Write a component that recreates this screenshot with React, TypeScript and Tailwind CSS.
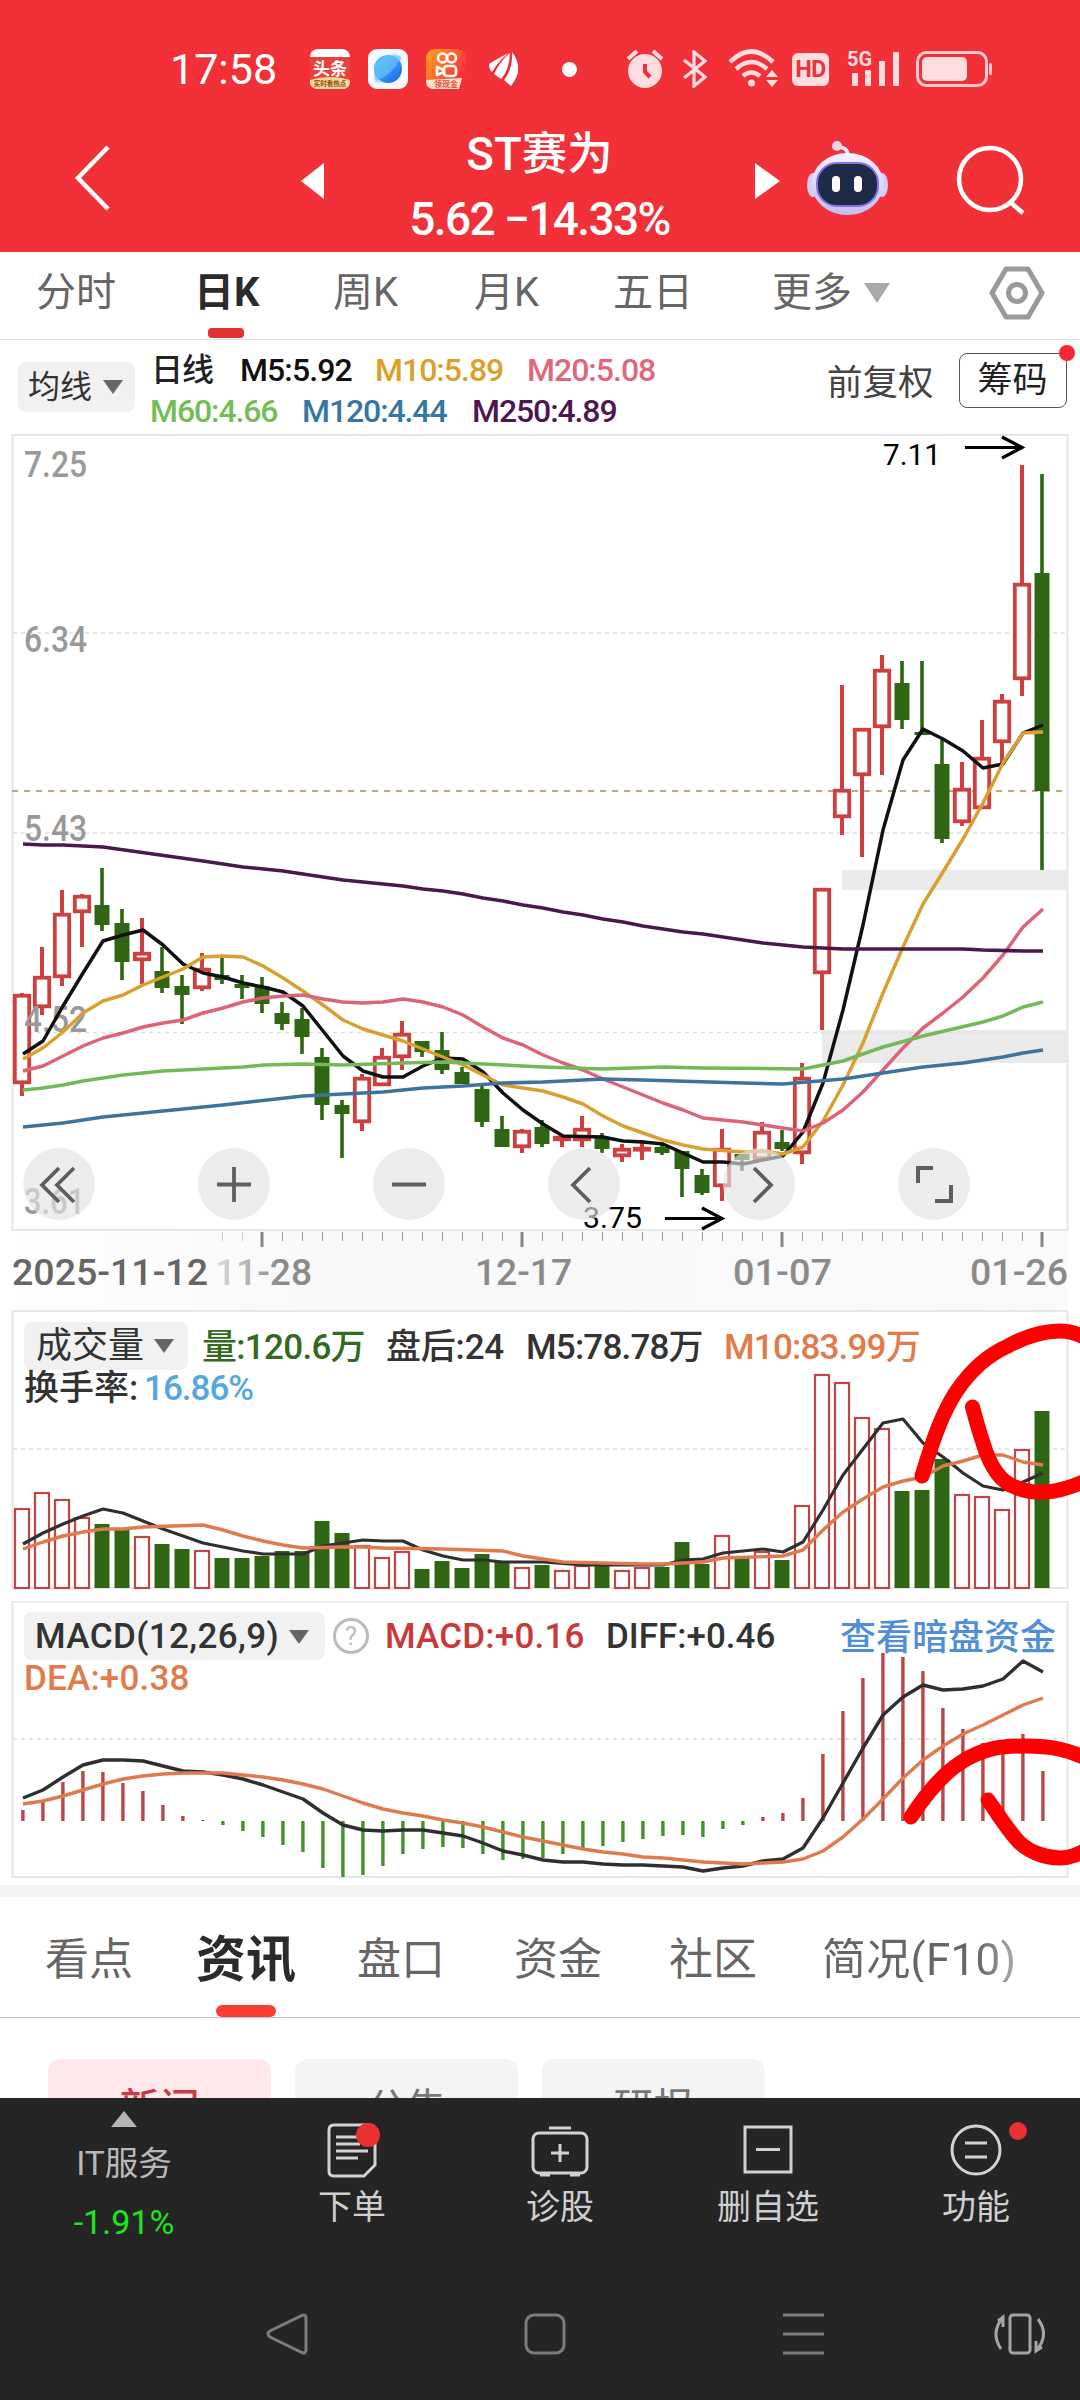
import type { ReactNode } from 'react';

// x of the n-th trading day on the shared time axis
const dayX = (i: number) => 22 + i * 20;

// [up, high, bodyTop, bodyBottom, low]
const candles: [number, number, number, number, number][] = [
  [1, 993, 994, 1084, 1096], [1, 947, 976, 1008, 1015], [1, 890, 913, 978, 986], [1, 894, 895, 913, 947],
  [0, 868, 905, 925, 931], [0, 909, 923, 962, 980], [1, 918, 952, 961, 984], [0, 947, 971, 988, 993],
  [0, 975, 986, 995, 1024], [1, 953, 968, 989, 991], [0, 957, 975, 980, 984], [0, 975, 984, 988, 999],
  [0, 977, 986, 1004, 1013], [0, 1002, 1013, 1024, 1030], [0, 1008, 1019, 1037, 1054], [0, 1048, 1057, 1105, 1120],
  [0, 1100, 1105, 1114, 1158], [1, 1074, 1077, 1123, 1131], [1, 1048, 1056, 1086, 1086], [1, 1021, 1033, 1058, 1070],
  [0, 1041, 1041, 1052, 1057], [0, 1032, 1050, 1070, 1074], [0, 1067, 1072, 1084, 1084], [0, 1085, 1089, 1122, 1127],
  [0, 1116, 1129, 1147, 1147], [1, 1129, 1130, 1148, 1153], [0, 1120, 1127, 1144, 1147], [1, 1135, 1136, 1141, 1147],
  [1, 1116, 1128, 1141, 1147], [0, 1133, 1138, 1149, 1153], [1, 1144, 1148, 1157, 1162], [1, 1140, 1147, 1150, 1160],
  [0, 1143, 1147, 1153, 1155], [0, 1151, 1151, 1169, 1197], [0, 1169, 1175, 1193, 1195], [1, 1129, 1148, 1187, 1201],
  [0, 1154, 1154, 1160, 1171], [1, 1122, 1131, 1160, 1160], [0, 1130, 1142, 1149, 1151], [1, 1063, 1077, 1154, 1164],
  [1, 888, 888, 974, 1030], [1, 685, 789, 818, 835], [1, 728, 728, 776, 857], [1, 655, 669, 728, 775],
  [0, 661, 683, 720, 729], [0, 661, 732, 735, 735], [0, 740, 764, 839, 843], [1, 762, 788, 823, 826],
  [1, 720, 757, 809, 809], [1, 694, 700, 743, 763], [1, 465, 583, 680, 696], [0, 474, 573, 791, 870],
];

const volumes = [
  1508, 1492, 1499, 1517, 1524, 1529, 1536, 1544, 1549, 1550, 1558, 1558, 1556, 1551, 1551, 1521, 1533, 1545,
  1557, 1551, 1569, 1561, 1568, 1554, 1562, 1567, 1565, 1570, 1565, 1566, 1570, 1567, 1567, 1542, 1564, 1535,
  1556, 1551, 1560, 1505, 1374, 1382, 1417, 1428, 1491, 1490, 1459, 1494, 1496, 1509, 1449, 1411,
];

const macdBars = [
  1810, 1802, 1782, 1771, 1772, 1783, 1791, 1805, 1816, 1820, 1825, 1831, 1837, 1845, 1852, 1868, 1877, 1875,
  1866, 1854, 1849, 1847, 1848, 1854, 1860, 1859, 1858, 1854, 1848, 1846, 1842, 1839, 1836, 1835, 1837, 1829,
  1825, 1817, 1813, 1798, 1754, 1711, 1678, 1653, 1657, 1671, 1708, 1729, 1743, 1746, 1734, 1771,
];

const ma250 = [
  [0, 844], [1, 845], [2, 845], [4, 847], [9, 861], [10, 864], [11, 867], [13, 871], [15, 877], [16, 880], [19, 886],
  [20, 889], [21, 891], [22, 894], [23, 898], [24, 901], [25, 905], [26, 908], [27, 912], [28, 915], [29, 919],
  [30, 922], [31, 926], [33, 932], [34, 934], [37, 943], [39, 947], [41, 949], [47, 949], [48, 950], [50, 951], [51, 951],
];
const ma5 = [
  [0, 1054], [1, 1041], [2, 1006], [3, 973], [4, 941], [5, 935], [6, 930], [7, 945], [8, 964], [9, 973], [10, 977],
  [11, 983], [12, 987], [13, 992], [14, 1006], [15, 1031], [16, 1056], [17, 1071], [18, 1077], [19, 1077], [20, 1066],
  [21, 1058], [22, 1059], [23, 1072], [24, 1093], [25, 1110], [26, 1124], [27, 1136], [29, 1137], [30, 1141],
  [31, 1142], [32, 1144], [33, 1153], [34, 1162], [35, 1162], [36, 1164], [37, 1160], [38, 1156], [39, 1132],
  [40, 1083], [41, 1010], [42, 925], [43, 830], [44, 760], [45, 729], [46, 739], [47, 751], [48, 768], [49, 764],
  [50, 733], [51, 725],
];
const ma10 = [
  [0, 1059], [1, 1048], [2, 1032], [3, 1013], [4, 1001], [5, 995], [6, 985], [7, 977], [8, 969], [9, 957], [10, 956],
  [11, 957], [12, 966], [13, 978], [14, 991], [15, 1005], [16, 1020], [17, 1029], [18, 1035], [19, 1041], [20, 1049],
  [21, 1057], [22, 1065], [23, 1075], [24, 1085], [25, 1088], [26, 1091], [27, 1097], [28, 1104], [29, 1116],
  [30, 1126], [31, 1133], [32, 1140], [33, 1145], [34, 1149], [36, 1152], [37, 1151], [38, 1154], [39, 1147],
  [40, 1121], [41, 1085], [42, 1043], [43, 993], [44, 947], [45, 904], [46, 872], [47, 839], [48, 803], [49, 763],
  [50, 733], [51, 732],
];
const ma20 = [
  [0, 1071], [1, 1066], [2, 1056], [3, 1046], [4, 1038], [5, 1033], [6, 1027], [7, 1023], [8, 1020], [9, 1013],
  [10, 1008], [11, 1002], [12, 998], [13, 996], [14, 995], [15, 999], [16, 1002], [17, 1003], [18, 1002], [19, 999],
  [20, 1002], [21, 1007], [22, 1015], [23, 1027], [24, 1038], [25, 1045], [26, 1055], [27, 1063], [28, 1070],
  [29, 1079], [30, 1087], [31, 1095], [32, 1103], [33, 1110], [34, 1118], [35, 1120], [36, 1122], [37, 1125],
  [38, 1128], [39, 1131], [40, 1123], [41, 1110], [42, 1092], [43, 1070], [44, 1048], [45, 1028], [46, 1013],
  [47, 997], [48, 978], [49, 955], [50, 927], [51, 909],
];
const ma60 = [
  [0, 1090], [1, 1088], [2, 1085], [3, 1081], [5, 1075], [7, 1071], [11, 1067], [12, 1065], [14, 1064], [16, 1065],
  [19, 1063], [21, 1062], [26, 1067], [29, 1069], [32, 1067], [34, 1068], [39, 1069], [41, 1061], [43, 1047],
  [45, 1036], [48, 1022], [49, 1016], [50, 1007], [51, 1002],
];
const ma120 = [
  [0, 1127], [2, 1123], [4, 1117], [10, 1105], [14, 1096], [18, 1092], [20, 1088], [22, 1086], [24, 1083], [26, 1082],
  [29, 1079], [31, 1080], [36, 1083], [38, 1084], [41, 1079], [43, 1073], [45, 1067], [47, 1063], [49, 1057],
  [50, 1053], [51, 1050],
];
const volMa5 = [
  [0, 1544], [1, 1533], [2, 1524], [3, 1516], [4, 1509], [5, 1513], [6, 1521], [7, 1529], [8, 1536], [9, 1543],
  [10, 1547], [11, 1551], [12, 1554], [14, 1554], [15, 1546], [16, 1543], [17, 1540], [18, 1541], [19, 1541],
  [20, 1550], [21, 1556], [22, 1560], [23, 1560], [24, 1562], [26, 1562], [28, 1565], [32, 1565], [33, 1560],
  [34, 1559], [35, 1553], [37, 1549], [38, 1552], [39, 1542], [40, 1510], [41, 1475], [42, 1449], [43, 1423],
  [44, 1419], [45, 1443], [46, 1457], [47, 1473], [48, 1486], [49, 1490], [50, 1482], [51, 1473],
];
const volMa10 = [
  [0, 1549], [1, 1542], [2, 1536], [3, 1532], [4, 1529], [5, 1529], [6, 1527], [9, 1525], [10, 1530], [11, 1536],
  [12, 1541], [13, 1545], [14, 1548], [16, 1547], [17, 1547], [18, 1548], [21, 1549], [24, 1551], [25, 1556],
  [26, 1559], [27, 1562], [31, 1564], [32, 1564], [34, 1562], [35, 1558], [38, 1556], [39, 1550], [40, 1530],
  [41, 1512], [42, 1499], [43, 1487], [44, 1481], [45, 1477], [46, 1466], [47, 1461], [48, 1455], [49, 1455],
  [50, 1462], [51, 1465],
];
const diff = [
  [0, 1798], [1, 1790], [2, 1777], [3, 1765], [4, 1760], [5, 1760], [6, 1761], [7, 1766], [8, 1771], [9, 1772],
  [10, 1775], [11, 1779], [12, 1785], [13, 1792], [14, 1799], [15, 1813], [16, 1825], [17, 1830], [18, 1831],
  [19, 1830], [20, 1830], [21, 1833], [22, 1836], [23, 1843], [24, 1851], [25, 1855], [26, 1860], [27, 1862],
  [28, 1862], [29, 1864], [30, 1865], [31, 1865], [32, 1866], [33, 1867], [34, 1871], [35, 1868], [36, 1866],
  [37, 1861], [38, 1859], [39, 1848], [40, 1818], [41, 1783], [42, 1748], [43, 1715], [44, 1697], [45, 1685],
  [46, 1690], [47, 1689], [48, 1686], [49, 1679], [50, 1661], [51, 1672],
];
const dea = [
  [0, 1804], [1, 1801], [2, 1796], [3, 1790], [4, 1784], [5, 1779], [6, 1776], [7, 1774], [8, 1773], [10, 1773],
  [12, 1777], [13, 1780], [14, 1784], [15, 1789], [16, 1796], [17, 1803], [18, 1809], [19, 1813], [20, 1816],
  [21, 1820], [22, 1823], [23, 1827], [24, 1832], [25, 1837], [26, 1841], [27, 1845], [28, 1849], [29, 1852],
  [30, 1854], [31, 1857], [32, 1858], [33, 1860], [34, 1862], [36, 1864], [37, 1863], [38, 1862], [39, 1859],
  [40, 1851], [41, 1837], [42, 1819], [43, 1799], [44, 1778], [45, 1760], [46, 1746], [47, 1734], [48, 1725],
  [49, 1715], [50, 1705], [51, 1698],
];

const majorTicks = [262, 522, 782, 1042];

function Line({ data, color, width = 3.5 }: { data: number[][]; color: string; width?: number }) {
  return (
    <polyline
      points={data.map(([i, y]) => `${dayX(i) + 1},${y}`).join(' ')}
      fill="none"
      stroke={color}
      strokeWidth={width}
      strokeLinejoin="round"
    />
  );
}

function Grid({ ys }: { ys: number[] }) {
  return (
    <>
      {ys.map((y) => (
        <line key={y} x1="13" x2="1066" y1={y} y2={y} stroke="#dedede" strokeWidth="1.5" strokeDasharray="4 4" />
      ))}
    </>
  );
}

function StatusBar() {
  return (
    <div className="flex h-[104px] items-center pt-[34px] pl-[170px] text-white">
      <span className="w-[140px] text-[43px] leading-none">17:58</span>
      <svg width="40" height="40" viewBox="0 0 40 40">
        <rect width="40" height="40" rx="8" fill="#fff" />
        <path d="M0 8H40V31H0Z" fill="#e8423b" />
        <path d="M0 31Q20 25 40 31V32Q40 40 32 40H8Q0 40 0 32Z" fill="#fbdb9b" />
        <text x="20" y="26" textAnchor="middle" fontSize="17" fontWeight="700" fill="#fff">头条</text>
        <text x="20" y="37" textAnchor="middle" fontSize="6.5" fontWeight="700" fill="#8f4a10">实时看热点</text>
      </svg>
      <svg className="ml-[18px]" width="40" height="40" viewBox="0 0 40 40">
        <defs>
          <linearGradient id="globe" x1="0" y1="0" x2="1" y2="1">
            <stop offset="0" stopColor="#5ccbff" />
            <stop offset="1" stopColor="#1463e6" />
          </linearGradient>
        </defs>
        <rect width="40" height="40" rx="9" fill="#f7fbff" />
        <ellipse cx="20" cy="20" rx="18" ry="7" fill="#bfe2ff" transform="rotate(-45 20 20)" />
        <circle cx="20" cy="20" r="14" fill="url(#globe)" />
        <path d="M8 32Q24 26 33 9Q28 2 16 8Q6 14 6 24Q6 29 8 32Z" fill="#6cc6ff" opacity=".65" />
      </svg>
      <svg className="ml-[18px]" width="40" height="40" viewBox="0 0 40 40">
        <defs>
          <linearGradient id="kuai" x1="0" y1="0" x2="1" y2=".6">
            <stop offset="0" stopColor="#ffa51f" />
            <stop offset="1" stopColor="#fb2b3a" />
          </linearGradient>
        </defs>
        <rect width="40" height="40" rx="9" fill="url(#kuai)" />
        <g fill="none" stroke="#fff" strokeWidth="2.6">
          <circle cx="16.500" cy="9" r="4.500" />
          <circle cx="25.500" cy="9" r="4.500" />
          <rect x="18" y="17" width="12" height="10" rx="3" />
          <path d="M18 21L11 18V26L18 23" strokeLinejoin="round" />
        </g>
        <path d="M0 31L36 29L33 40H8Q0 40 0 32Z" fill="#fde3cf" />
        <text x="20" y="38" textAnchor="middle" fontSize="8" fontWeight="700" fill="#e0503a">领现金</text>
      </svg>
      <svg className="ml-[23px]" width="30" height="36" viewBox="0 0 30 36" fill="#fff">
        <path d="M0 13Q11 6 20 2Q10 9 3 21Q0 18 0 13Z" />
        <path d="M21 2Q11 10 5 23L12 28Q20 20 21 2Z" />
        <path d="M23 1Q24 18 15 29L22 35Q36 18 23 1Z" />
      </svg>
      <span className="ml-[43px] size-[15px] rounded-full bg-white" />
      <svg className="ml-[49px]" width="38" height="40" viewBox="0 0 38 40">
        <circle cx="19" cy="22" r="17" fill="#ffdcdf" />
        <path d="M2 10L11 2M36 10L27 2" stroke="#ffdcdf" strokeWidth="4" />
        <path d="M19 15V23L24 28" fill="none" stroke="#f23038" strokeWidth="4" />
      </svg>
      <svg className="ml-[19px]" width="24" height="38" viewBox="0 0 24 38" fill="none" stroke="#ffdcdf" strokeWidth="3.200">
        <path d="M1 10L22 27L11 36V2L22 11L1 28" />
      </svg>
      <svg className="ml-[21px]" width="52" height="40" viewBox="0 0 52 40">
        <g fill="none" stroke="#ffdcdf" strokeWidth="4.500">
          <path d="M2 13Q23 -8 45 13" />
          <path d="M8 20Q23 6 39 20" />
          <path d="M15 27Q23 20 32 27" />
        </g>
        <circle cx="23.500" cy="34" r="3.500" fill="#ffdcdf" />
        <path d="M38 28L44 21L50 28ZM38 31L44 38L50 31Z" fill="#ffdcdf" />
      </svg>
      <span className="ml-[12px] flex h-[33px] w-[37px] items-center justify-center rounded-[6px] bg-[#ffdcdf] text-[23px] leading-none font-bold tracking-[-0.5px] text-[#f23038]">
        HD
      </span>
      <svg className="ml-[18px]" width="54" height="40" viewBox="0 0 54 40" fill="#ffdcdf">
        <text x="0" y="17" fontSize="21" fontWeight="700" textLength="25" lengthAdjust="spacingAndGlyphs">5G</text>
        <rect x="5" y="24" width="6" height="13" rx="1" />
        <rect x="18" y="21" width="6" height="16" rx="1" />
        <rect x="32" y="12" width="6" height="25" rx="1" />
        <rect x="46" y="3" width="6" height="34" rx="1" />
      </svg>
      <svg className="ml-[15px]" width="76" height="36" viewBox="0 0 76 36">
        <rect x="1.500" y="1.500" width="69" height="33" rx="9" fill="none" stroke="#ffc9cd" strokeWidth="3" />
        <rect x="6" y="6" width="45" height="24" rx="5" fill="#ffdcdf" />
        <rect x="73" y="12" width="3" height="12" rx="1.500" fill="#ffc9cd" />
      </svg>
    </div>
  );
}

function Header() {
  return (
    <header className="h-[252px] shrink-0 bg-[#f23038] text-white">
      <StatusBar />
      <div className="flex h-[148px] items-center">
        <svg className="ml-[74px]" width="38" height="66" viewBox="0 0 38 66" fill="none" stroke="#fff" strokeWidth="4.500">
          <path d="M34 2L4 33L34 64" />
        </svg>
        <svg className="ml-[189px] mt-[6px]" width="23" height="36" viewBox="0 0 23 36" fill="#fff">
          <path d="M23 0V36L0 18Z" />
        </svg>
        <div className="flex w-[431px] flex-col items-center pt-[17px]">
          <span className="text-[45.500px] leading-[64px] font-medium">ST赛为</span>
          <span className="text-[46px] leading-[64px] font-medium tracking-[-1.6px]">5.62 −14.33%</span>
        </div>
        <svg className="mt-[6px]" width="25" height="36" viewBox="0 0 25 36" fill="#fff">
          <path d="M0 0V36L25 18Z" />
        </svg>
        <svg className="ml-[26px]" width="83" height="76" viewBox="0 0 83 76">
          <defs>
            <linearGradient id="robot" x1="0" y1="0" x2="0" y2="1">
              <stop offset="0" stopColor="#f4f1ff" />
              <stop offset="1" stopColor="#c3bef0" />
            </linearGradient>
          </defs>
          <path d="M42 16Q42 7 32 7" fill="none" stroke="#ece8ff" strokeWidth="3.500" />
          <circle cx="31" cy="6" r="5" fill="#efd3e8" />
          <ellipse cx="7" cy="45" rx="6" ry="12" fill="#d3cdf7" />
          <ellipse cx="76" cy="45" rx="6" ry="12" fill="#d3cdf7" />
          <ellipse cx="41.500" cy="44" rx="36" ry="31" fill="url(#robot)" />
          <rect x="11" y="23" width="61" height="43" rx="20" fill="#1d2b46" stroke="#8470e8" strokeWidth="2" />
          <rect x="26" y="36" width="8" height="16" rx="4" fill="#fff" />
          <rect x="48" y="36" width="8" height="16" rx="4" fill="#fff" />
        </svg>
        <svg className="ml-[67px] mt-[3px]" width="70" height="70" viewBox="0 0 70 70" fill="none" stroke="#fff" strokeWidth="4.500">
          <circle cx="34" cy="34" r="31" />
          <path d="M54 57L67 68" />
        </svg>
      </div>
    </header>
  );
}

function PeriodTabs() {
  return (
    <nav className="flex h-[88px] shrink-0 items-center border-b border-[#e2e2e2] pb-[5px] text-[40px] leading-none text-[#666]">
      <span className="ml-[36px] w-[158px]">分时</span>
      <span className="relative w-[139px] font-bold text-[#2b2b2b]">
        日K
        <i className="absolute top-[55px] left-[14px] h-[10px] w-[36px] rounded-[4px] bg-[#e23232]" />
      </span>
      <span className="w-[141px]">周K</span>
      <span className="w-[139px]">月K</span>
      <span className="w-[159px]">五日</span>
      <span className="w-[92px]">更多</span>
      <svg width="26" height="20" viewBox="0 0 26 20" fill="#a9a9a9">
        <path d="M0 0H26L13 20Z" />
      </svg>
      <svg className="ml-[99px]" width="56" height="54" viewBox="0 0 56 54" fill="none" stroke="#999" strokeWidth="5">
        <path d="M17 3H39L53 27L39 51H17L3 27Z" strokeLinejoin="round" />
        <circle cx="28" cy="27" r="8.500" />
      </svg>
    </nav>
  );
}

function Caret() {
  return (
    <svg width="20" height="14" viewBox="0 0 20 14" fill="#666">
      <path d="M0 0H20L10 14Z" />
    </svg>
  );
}

function AverageRow() {
  return (
    <div className="flex h-[94px] shrink-0 pl-[18px]">
      <div className="mt-[22px] flex h-[50px] w-[117px] items-center justify-between rounded-lg bg-[#f1f1f1] pr-3 pl-[10px] text-[32px] leading-none text-[#333]">
        均线 <Caret />
      </div>
      <div className="mt-[10px] ml-[15px] w-[677px] text-[32px] leading-[41px] font-medium tracking-[-0.9px]">
        <div className="flex">
          <span className="ml-[1px] w-[89px] text-[32px] text-[#222]">日线</span>
          <span className="w-[135px] text-[#111]">M5:5.92</span>
          <span className="w-[152px] tracking-[-1px] text-[#dba02a]">M10:5.89</span>
          <span className="tracking-[-1px] text-[#e0687a]">M20:5.08</span>
        </div>
        <div className="flex tracking-[-1.1px]">
          <span className="w-[152px] text-[#73bd54]">M60:4.66</span>
          <span className="w-[170px] text-[#3576a3]">M120:4.44</span>
          <span className="text-[#4d1650]">M250:4.89</span>
        </div>
      </div>
      <span className="mt-[25px] text-[35.500px] leading-[36px] text-[#444]">前复权</span>
      <div className="relative mt-[13px] ml-[25px] flex h-[55px] w-[108px] items-center justify-center rounded-lg border-[1.5px] border-[#555] text-[35px] leading-none text-[#222]">
        筹码
        <i className="absolute -top-[9px] -right-[9px] size-[16px] rounded-full bg-[#fa2638]" />
      </div>
    </div>
  );
}

function AxisText({ x, y, w, fill = '#999', children }: { x: number; y: number; w: number; fill?: string; children: ReactNode }) {
  return (
    <text x={x} y={y} textLength={w} lengthAdjust="spacingAndGlyphs" fontSize="36" fontWeight="500" fill={fill}>
      {children}
    </text>
  );
}

function RoundButton({ children }: { children: ReactNode }) {
  return (
    <button className="flex size-[72px] items-center justify-center rounded-full bg-[#e2e2e2]/65">
      <svg width="72" height="72" viewBox="0 0 72 72" fill="none" stroke="#5e5e5e" strokeWidth="3.800">
        {children}
      </svg>
    </button>
  );
}

function PriceChart() {
  return (
    <section className="relative h-[876px] shrink-0">
      <svg width="1080" height="876" viewBox="0 434 1080 876">
        <defs>
          <linearGradient id="axisBg" x1="0" y1="0" x2="1" y2="0">
            <stop offset="0" stopColor="#fff" />
            <stop offset=".3" stopColor="#f8f8f8" />
            <stop offset="1" stopColor="#fafafa" />
          </linearGradient>
          <linearGradient id="dateFade" gradientUnits="userSpaceOnUse" x1="215" y1="0" x2="280" y2="0">
            <stop offset="0" stopColor="#ddd" />
            <stop offset="1" stopColor="#8a8a8a" />
          </linearGradient>
        </defs>
        <rect x="13" y="1231" width="1055" height="79" fill="url(#axisBg)" />
        <rect x="842" y="870" width="226" height="20" fill="#eaeaea" />
        <rect x="822" y="1030" width="246" height="33" fill="#eaeaea" />
        <rect x="12.500" y="435" width="1055" height="795" fill="none" stroke="#e6e6e6" strokeWidth="2" />
        <Grid ys={[633, 833, 1032.5]} />
        <line x1="12" x2="1066" y1="791" y2="791" stroke="#bfa880" strokeWidth="2" strokeDasharray="6 6" />

        {candles.map(([up, hi, top, bottom, lo], i) => {
          const x = dayX(i);
          return up ? (
            <g key={i} stroke="#cf3f3f">
              <path d={`M${x} ${hi}V${top + 1}M${x} ${bottom - 1}V${lo}`} strokeWidth="4" />
              <rect x={x - 7.2} y={top + 1.7} width="14.400" height={Math.max(bottom - top - 3.4, 1)} fill="#fff" strokeWidth="3.800" />
            </g>
          ) : (
            <g key={i} fill="#2f6613">
              <rect x={x - 1.8} y={hi} width="3.600" height={lo - hi} />
              <rect x={x - 7.5} y={top} width="15" height={bottom - top} />
            </g>
          );
        })}

        <AxisText x={24} y={477} w={63}>7.25</AxisText>
        <AxisText x={24} y={652} w={63}>6.34</AxisText>
        <AxisText x={24} y={841} w={63}>5.43</AxisText>
        <AxisText x={24} y={1032} w={63}>4.52</AxisText>
        <AxisText x={24} y={1214} w={61}>3.61</AxisText>

        <Line data={ma5} color="#111" />
        <Line data={ma10} color="#d9a02f" />
        <Line data={ma20} color="#dc6476" />
        <Line data={ma60} color="#74b957" />
        <Line data={ma120} color="#3d739d" />
        <Line data={ma250} color="#4b184c" />

        <text x="883" y="465" textLength="58" lengthAdjust="spacingAndGlyphs" fontSize="30">7.11</text>
        <text x="583" y="1228" textLength="59" lengthAdjust="spacingAndGlyphs" fontSize="30">3.75</text>
        <g fill="none" stroke="#000" strokeWidth="3.200">
          <path d="M965 447.500H1022M1002 437L1022 447.500L1002 458" />
          <path d="M665 1218.500H722M702 1208L722 1218.500L702 1229" />
        </g>

        {Array.from({ length: 42 }, (_, k) => 222 + k * 20).map((x) =>
          majorTicks.includes(x) ? (
            <rect key={x} x={x - 1.5} y="1232" width="3" height="15" fill="#858585" />
          ) : (
            <rect key={x} x={x} y="1232" width="1" height="9" fill={x < 250 ? '#ccc' : '#999'} />
          )
        )}
        <AxisText x={12} y={1285} w={196} fill="#666">2025-11-12</AxisText>
        <AxisText x={215} y={1285} w={97} fill="url(#dateFade)">11-28</AxisText>
        <AxisText x={475} y={1285} w={97} fill="#8a8a8a">12-17</AxisText>
        <AxisText x={733} y={1285} w={99} fill="#8a8a8a">01-07</AxisText>
        <AxisText x={970} y={1285} w={98} fill="#8a8a8a">01-26</AxisText>
      </svg>
      {/* Chart controls */}
      <div className="absolute top-[714px] left-[23px] flex gap-[103px]">
        <RoundButton><path d="M36 20L19 37L36 54M51 20L34 37L51 54" /></RoundButton>
        <RoundButton><path d="M36 19V54M19 36.500H53" /></RoundButton>
        <RoundButton><path d="M19 36.500H53" /></RoundButton>
        <RoundButton><path d="M42 20L25 37L42 54" /></RoundButton>
        <RoundButton><path d="M31 20L48 37L31 54" /></RoundButton>
        <RoundButton><path d="M20 35V20H35M53 37V53H37" strokeWidth="4" /></RoundButton>
      </div>
    </section>
  );
}

function VolumePanel() {
  return (
    <section className="relative h-[291px] shrink-0 text-[35px] font-medium text-[#333]">
      <div className="absolute inset-0">
        <svg width="1080" height="291" viewBox="0 1310 1080 291">
          <rect x="12.500" y="1311" width="1055" height="277" fill="none" stroke="#e6e6e6" strokeWidth="2" />
          <Grid ys={[1449]} />
          {volumes.map((y, i) =>
            candles[i][0] ? (
              <rect key={i} x={dayX(i) - 7} y={y + 1} width="14" height={1587 - y} fill="#fff" stroke="#c04545" strokeWidth="2.200" />
            ) : (
              <rect key={i} x={dayX(i) - 7.5} y={y} width="15" height={1588 - y} fill="#2f6613" />
            )
          )}
          <Line data={volMa5} color="#2f2f2f" width={3.2} />
          <Line data={volMa10} color="#de7a4d" width={3.4} />
        </svg>
      </div>
      <div className="relative pt-[12px] pl-[24px]">
        <div className="flex h-[48px] items-center leading-none">
          <div className="flex h-[48px] w-[164px] items-center justify-between rounded-lg bg-[#f1f1f1] pr-[14px] pl-[12px] text-[36px] font-normal">
            成交量 <Caret />
          </div>
          <span className="mt-[2px] ml-[14px] w-[184px] tracking-[-0.7px] text-[#336a1c]">量:120.6万</span>
          <span className="mt-[2px] w-[140px] tracking-[-0.2px]">盘后:24</span>
          <span className="mt-[2px] w-[198px] tracking-[-0.8px]">M5:78.78万</span>
          <span className="mt-[2px] tracking-[-0.8px] text-[#e07b4c]">M10:83.99万</span>
        </div>
        <div className="flex h-[36px] items-center leading-none">
          <span className="w-[120px]">换手率:</span>
          <span className="tracking-[-1px] text-[#52a8de]">16.86%</span>
        </div>
      </div>
    </section>
  );
}

function MacdPanel() {
  return (
    <section className="relative h-[284px] shrink-0 text-[35px] font-medium text-[#333]">
      <div className="absolute inset-0">
        <svg width="1080" height="284" viewBox="0 1601 1080 284">
          <rect x="12.500" y="1601.500" width="1055" height="275.500" fill="none" stroke="#e6e6e6" strokeWidth="2" />
          <Grid ys={[1739]} />
          {macdBars.map((y, i) => (
            <rect
              key={i}
              x={dayX(i) - 0.8}
              y={Math.min(y, 1821)}
              width="3.400"
              height={Math.abs(y - 1821)}
              fill={y < 1821 ? '#bd4545' : '#43902f'}
            />
          ))}
          <Line data={diff} color="#2f2f2f" width={3.4} />
          <Line data={dea} color="#de7a4d" width={3.4} />
        </svg>
      </div>
      <div className="relative pt-[11px] pl-[24px]">
        <div className="flex h-[48px] items-center leading-none">
          <div className="flex h-[48px] w-[301px] items-center justify-between rounded-lg bg-[#f1f1f1] pt-px pr-[16px] pl-[11px] tracking-[0.4px]">
            MACD(12,26,9) <Caret />
          </div>
          <span className="ml-[8px] flex size-[36px] items-center justify-center rounded-full border-[3px] border-[#bbb] text-[26px] font-normal text-[#bbb]">
            ?
          </span>
          <span className="mt-px ml-[16px] w-[221px] tracking-[0.2px] text-[#c83a3a]">MACD:+0.16</span>
          <span className="mt-px w-[234px]">DIFF:+0.46</span>
          <span className="mt-[3px] text-[36px] text-[#4f8fd6]">查看暗盘资金</span>
        </div>
        <div className="flex h-[36px] items-center leading-none tracking-[0.2px] text-[#e07b4c]">DEA:+0.38</div>
      </div>
    </section>
  );
}

function InfoTabs() {
  return (
    <>
      <div className="h-[12px] shrink-0 bg-[#f4f4f4]" />
      <nav className="flex h-[121px] shrink-0 items-center border-b border-[#c4c4c4] pt-[5px] text-[44px] leading-none text-[#666]">
        <span className="ml-[45px] w-[151px]">看点</span>
        <span className="relative w-[161px] text-[50px] font-bold text-[#2b2b2b]">
          资讯
          <i className="absolute top-[70px] left-[20px] h-[12px] w-[60px] rounded-[6px] bg-[#fa3c32]" />
        </span>
        <span className="w-[157px]">盘口</span>
        <span className="w-[155px]">资金</span>
        <span className="w-[153px]">社区</span>
        <span className="bg-gradient-to-r from-[#666] from-80% to-[#aaa] bg-clip-text tracking-[0.3px] text-transparent">简况(F10)</span>
      </nav>
      <div className="flex h-[80px] shrink-0 gap-[24px] overflow-hidden pt-[41px] pl-[48px] text-[40px] leading-none text-[#777]">
        <span className="flex h-[98px] w-[223px] shrink-0 items-center justify-center rounded-xl bg-[#fee8ea] pt-[2px] font-medium text-[#c93a48]">新闻</span>
        <span className="flex h-[98px] w-[223px] shrink-0 items-center justify-center rounded-xl bg-[#f4f4f4] pt-[2px]">公告</span>
        <span className="flex h-[98px] w-[223px] shrink-0 items-center justify-center rounded-xl bg-[#f4f4f4] pt-[2px]">研报</span>
      </div>
    </>
  );
}

function BarItem({ label, children }: { label: string; children: ReactNode }) {
  return (
    <div className="flex w-[208px] flex-col items-center pt-[22px] text-[34px] leading-none text-[#cfcfcf]">
      <svg className="overflow-visible" width="60" height="60" viewBox="0 0 60 60" fill="none" stroke="#d2d2d2" strokeWidth="3">
        {children}
      </svg>
      <span className="mt-[10px]">{label}</span>
    </div>
  );
}

function BottomBar() {
  return (
    <footer className="relative h-[302px] shrink-0 bg-[#252525]">
      <div className="flex h-[172px]">
        <div className="flex w-[248px] flex-col items-center pt-[13px]">
          <svg width="26" height="16" viewBox="0 0 26 16" fill="#b4b4b4">
            <path d="M13 0L26 16H0Z" />
          </svg>
          <span className="mt-[20px] text-[33.500px] leading-[34px] text-[#b8b8b8]">IT服务</span>
          <span className="mt-[24px] text-[34px] leading-[34px] text-[#1fe51f]">-1.91%</span>
        </div>
        <BarItem label="下单">
          <path d="M12 5H48Q53 5 53 10V45L42 56H12Q7 56 7 51V10Q7 5 12 5Z" />
          <path d="M14 17H38M14 24H38M14 31H46M14 38H36" />
          <circle cx="46" cy="15" r="12" fill="#e93033" stroke="none" />
        </BarItem>
        <BarItem label="诊股">
          <rect x="3" y="13" width="54" height="40" rx="6" />
          <path d="M19 8H41M30 24V42M21 33H39M10 55H20M40 55H50" />
        </BarItem>
        <BarItem label="删自选">
          <rect x="7" y="7" width="46" height="45" />
          <path d="M18 29.500H42" />
        </BarItem>
        <BarItem label="功能">
          <circle cx="30" cy="30" r="24" />
          <path d="M19 23H41M19 37H41" />
          <circle cx="72" cy="11" r="9" fill="#e93033" stroke="none" />
        </BarItem>
      </div>
      {/* System navigation */}
      <div className="flex h-[130px] items-start pt-[43px]">
        <svg className="ml-[266px]" width="42" height="42" viewBox="0 0 42 42" fill="none" stroke="#7c7c7c" strokeWidth="3">
          <path d="M36 2.500Q40 1 40 5V37Q40 41 36 39.500L4 24Q0 21 4 18Z" />
        </svg>
        <svg className="ml-[216px]" width="42" height="42" viewBox="0 0 42 42" fill="none" stroke="#7c7c7c" strokeWidth="3">
          <rect x="2" y="2" width="38" height="38" rx="8" />
        </svg>
        <svg className="ml-[217px]" width="41" height="42" viewBox="0 0 41 42" stroke="#7c7c7c" strokeWidth="3">
          <path d="M0 2H41M0 21H41M0 40H41" />
        </svg>
        <svg className="ml-[169px]" width="54" height="42" viewBox="0 0 54 42" fill="none" stroke="#a5a5a5" strokeWidth="3">
          <rect x="17" y="2" width="20" height="38" rx="3" />
          <path d="M8 36Q-3 20 10 4M10 14V4L5 8" />
          <path d="M45 6Q57 22 43 38M43 28V38L49 34" />
        </svg>
      </div>
    </footer>
  );
}

// Freehand red marks over the volume and MACD panels
function Marks() {
  return (
    <svg
      className="pointer-events-none absolute top-[1310px] left-0"
      width="1080"
      height="575"
      viewBox="0 1310 1080 575"
      fill="none"
      stroke="#ff0000"
      strokeWidth="15"
      strokeLinecap="round"
      strokeLinejoin="round"
    >
      <path d="M922 1476C934 1436 943 1412 956 1392C972 1368 990 1354 1008 1346C1028 1335 1044 1331 1060 1331Q1076 1331 1092 1342" />
      <path d="M972.500 1407C977 1424 980 1434 983 1443C990 1466 1000 1482 1015 1487C1036 1496 1058 1494 1092 1478" />
      <path d="M911 1817C924 1797 940 1776 960 1763C982 1748 1002 1746 1025 1746C1050 1746 1068 1749 1092 1761" />
      <path d="M988 1800C998 1814 1008 1831 1020 1843C1030 1852 1045 1858 1060 1858C1072 1858 1080 1853 1092 1847" />
    </svg>
  );
}

export default function App() {
  return (
    <div className="relative flex h-[2400px] w-[1080px] flex-col overflow-hidden bg-white font-['Roboto','Noto_Sans_CJK_SC',sans-serif]">
      <Header />
      <PeriodTabs />
      <AverageRow />
      <PriceChart />
      <VolumePanel />
      <MacdPanel />
      <InfoTabs />
      <BottomBar />
      <Marks />
    </div>
  );
}
